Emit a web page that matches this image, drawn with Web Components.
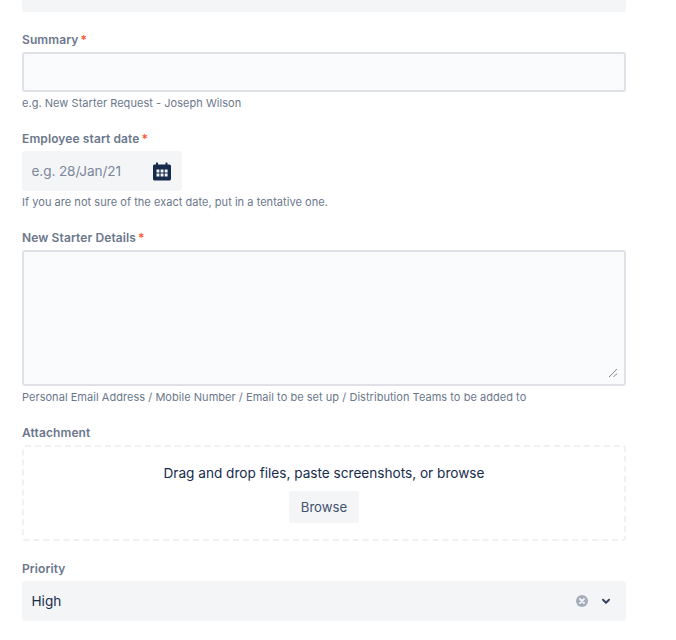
<!DOCTYPE html>
<html>
<head>
<meta charset="utf-8">
<style>
	html, body { margin: 0; padding: 0; background: #fff; }
	body { font-family: Inter, "Liberation Sans", sans-serif; overflow: hidden; height: 640px; }
	service-form { width: 604px; margin-left: 22px; }
</style>
</head>
<body>
<service-form>
	<form-field label="Summary" required help="e.g. New Starter Request - Joseph Wilson">
		<text-input></text-input>
	</form-field>
	<form-field label="Employee start date" required help="If you are not sure of the exact date, put in a tentative one.">
		<date-input placeholder="e.g. 28/Jan/21"></date-input>
	</form-field>
	<form-field label="New Starter Details" required help="Personal Email Address / Mobile Number / Email to be set up / Distribution Teams to be added to">
		<text-area></text-area>
	</form-field>
	<form-field label="Attachment">
		<drop-zone></drop-zone>
	</form-field>
	<form-field label="Priority">
		<select-box value="High"></select-box>
	</form-field>
</service-form>

<script>
class ServiceForm extends HTMLElement {
	constructor() {
		super()
		const shadow = this.attachShadow({ mode: 'open' })
		shadow.innerHTML = `
		<style>
			:host { display: block; }
			.top-box {
				height: 12px;
				background: #f4f5f7;
				border-radius: 0 0 3px 3px;
			}
		</style>
		<div class="top-box"></div>
		<slot></slot>
		`
	}
}

class FormField extends HTMLElement {
	constructor() {
		super()
		const shadow = this.attachShadow({ mode: 'open' })
		const required = this.hasAttribute('required') ? '<span class="req">*</span>' : ''
		const help = this.getAttribute('help')
		shadow.innerHTML = `
		<style>
			:host { display: block; padding-top: 20px; }
			label {
				display: block;
				font-size: 12px;
				font-weight: 600;
				line-height: 16px;
				letter-spacing: 0.11px;
				color: #6b778c;
				margin-bottom: 4px;
			}
			.req { color: #ff5630; margin-left: 2px; }
			.help {
				font-size: 11px;
				line-height: 16px;
				letter-spacing: 0.04px;
				color: #6b778c;
				margin-top: 3px;
			}
		</style>
		<label>${this.getAttribute('label')}${required}</label>
		<slot></slot>
		${help ? `<div class="help">${help}</div>` : ''}
		`
	}
}

class TextInput extends HTMLElement {
	constructor() {
		super()
		const shadow = this.attachShadow({ mode: 'open' })
		shadow.innerHTML = `
		<style>
			:host { display: block; }
			.box {
				height: 40px;
				box-sizing: border-box;
				background: #fafbfc;
				border: 2px solid #dfe1e6;
				border-radius: 3px;
			}
		</style>
		<div class="box"></div>
		`
	}
}

class DateInput extends HTMLElement {
	constructor() {
		super()
		const shadow = this.attachShadow({ mode: 'open' })
		shadow.innerHTML = `
		<style>
			:host { display: block; width: 160px; }
			.box {
				height: 40px;
				box-sizing: border-box;
				display: flex;
				align-items: center;
				justify-content: space-between;
				padding: 0 11px 0 9.500px;
				background: #f4f5f7;
				border-radius: 3px;
				font-size: 13.600px;
				letter-spacing: -0.1px;
				color: #7a869a;
			}
			svg { width: 18px; height: 19px; display: block; }
		</style>
		<div class="box">
			<span>${this.getAttribute('placeholder')}</span>
			<svg viewBox="0 0 18 19">
				<path fill="#172b4d" fill-rule="evenodd" d="M3 2.500V1c0-.3.2-.5.5-.5h1c.3 0 .5.2.5.5v1.500h7.500V1c0-.3.2-.5.5-.5h1c.3 0 .5.2.5.5v1.500h1.200C17.200 2.500 18 3.200 18 4v13c0 .8-.8 1.500-1.500 1.500h-15C.8 18.500 0 17.800 0 17V4c0-.8.8-1.500 1.500-1.500H3zM3.500 7.600v2.800h2.900V7.600H3.500zM7.600 7.600v2.800h2.900V7.600H7.600zM11.700 7.600v2.800h2.900V7.600h-2.900zM3.500 11.600v2.800h2.900v-2.800H3.500zM7.600 11.600v2.800h2.900v-2.800H7.600zM11.700 11.600v2.800h2.900v-2.800h-2.900z"/>
			</svg>
		</div>
		`
	}
}

class TextArea extends HTMLElement {
	constructor() {
		super()
		const shadow = this.attachShadow({ mode: 'open' })
		shadow.innerHTML = `
		<style>
			:host { display: block; }
			.box {
				position: relative;
				height: 136px;
				box-sizing: border-box;
				background: #fafbfc;
				border: 2px solid #dfe1e6;
				border-radius: 3px;
			}
			svg { position: absolute; right: 6px; bottom: 6px; width: 10px; height: 10px; }
		</style>
		<div class="box">
			<svg viewBox="0 0 10 10" fill="none" stroke="#5a5a5a" stroke-width="1" stroke-dasharray="1 .42">
				<path d="M1 9L9 1M5.500 9L9 5.500"/>
			</svg>
		</div>
		`
	}
}

class DropZone extends HTMLElement {
	constructor() {
		super()
		const shadow = this.attachShadow({ mode: 'open' })
		shadow.innerHTML = `
		<style>
			:host { display: block; }
			.box {
				height: 96px;
				box-sizing: border-box;
				border: 2px dashed #f0f1f4;
				border-radius: 3px;
				padding-top: 16px;
				display: flex;
				flex-direction: column;
				align-items: center;
			}
			p {
				margin: 0;
				font-size: 13.620px;
				line-height: 20px;
				color: #172b4d;
			}
			button {
				margin-top: 8px;
				height: 32px;
				padding: 0 12px;
				border: 0;
				border-radius: 3px;
				background: #f4f5f7;
				color: #42526e;
				font: inherit;
				font-size: 13.200px;
			}
		</style>
		<div class="box">
			<p>Drag and drop files, paste screenshots, or browse</p>
			<button>Browse</button>
		</div>
		`
	}
}

class SelectBox extends HTMLElement {
	constructor() {
		super()
		const shadow = this.attachShadow({ mode: 'open' })
		shadow.innerHTML = `
		<style>
			:host { display: block; }
			.box {
				height: 40px;
				box-sizing: border-box;
				display: flex;
				align-items: center;
				padding: 0 12px 0 9.500px;
				background: #f4f5f7;
				border-radius: 3px;
				font-size: 13.600px;
				color: #172b4d;
			}
			span { flex: 1; }
			svg { display: block; }
			.clear { width: 14px; height: 14px; margin-right: 9px; }
			.chev { width: 16px; height: 16px; }
		</style>
		<div class="box">
			<span>${this.getAttribute('value')}</span>
			<svg class="clear" viewBox="0 0 14 14">
				<circle cx="7" cy="7" r="6" fill="#a5adba"/>
				<path d="M5 5l4 4M9 5l-4 4" stroke="#f4f5f7" stroke-width="1.800" stroke-linecap="round"/>
			</svg>
			<svg class="chev" viewBox="0 0 16 16">
				<path d="M5 6.800l3 3 3-3" fill="none" stroke="#344563" stroke-width="2" stroke-linecap="round" stroke-linejoin="round"/>
			</svg>
		</div>
		`
	}
}

customElements.define('service-form', ServiceForm)
customElements.define('form-field', FormField)
customElements.define('text-input', TextInput)
customElements.define('date-input', DateInput)
customElements.define('text-area', TextArea)
customElements.define('drop-zone', DropZone)
customElements.define('select-box', SelectBox)
</script>
</body>
</html>
